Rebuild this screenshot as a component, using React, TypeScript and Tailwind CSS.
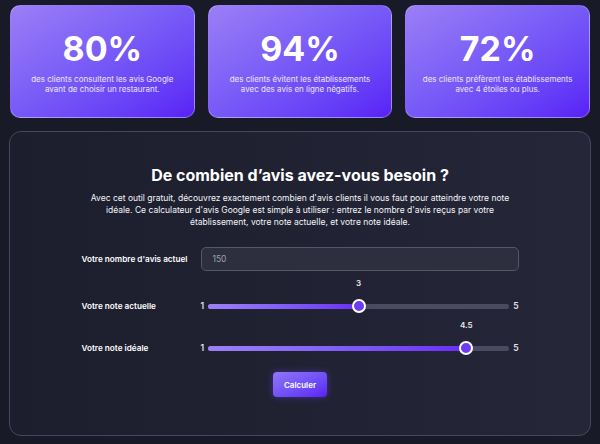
import { useState } from 'react';

const stats = [
  { value: '80%', text: ['des clients consultent les avis Google', 'avant de choisir un restaurant.'] },
  { value: '94%', text: ['des clients évitent les établissements', 'avec des avis en ligne négatifs.'] },
  { value: '72%', text: ['des clients préfèrent les établissements', 'avec 4 étoiles ou plus.'] },
];

function RangeRow({ label, value }: { label: string; value: number }) {
  const frac = (value - 1) / 4;
  return (
    <div className="flex items-center h-[14px]">
      <div className="w-[119px] text-[8.2px] font-semibold text-white">{label}</div>
      <div className="flex-1 flex items-center gap-[4px] text-[8.5px] font-semibold text-gray-200">
        <span>1</span>
        <div className="relative flex-1 h-[5px] rounded-full bg-[#4a4b5f]">
          <div
            className="h-full rounded-full bg-gradient-to-r from-[#9d80f7] to-[#6a2cf6]"
            style={{ width: `calc(7px + ${frac} * (100% - 14px))` }}
          />
          <div
            className="absolute top-1/2 -translate-y-1/2 w-[14px] h-[14px] rounded-full border-2 border-white bg-[#6b3cf4]"
            style={{ left: `calc(${frac} * (100% - 14px))` }}
          />
          <div
            className="absolute -top-[27px] w-[14px] text-center text-[8px] font-semibold text-gray-200"
            style={{ left: `calc(${frac} * (100% - 14px))` }}
          >
            {value}
          </div>
        </div>
        <span>5</span>
      </div>
    </div>
  );
}

export default function App() {
  const [count] = useState('150');

  return (
    <div className="w-[600px] h-[444px] bg-[#181a28] px-[9px] pt-[5px] font-['Inter',sans-serif] overflow-hidden">
      <div className="grid grid-cols-3 gap-[13px] px-[1px]">
        {stats.map((s) => (
          <div
            key={s.value}
            className="h-[113px] rounded-[10px] border border-white/25 bg-gradient-to-br from-[#9b7ef6] to-[#5a1ef6] flex flex-col items-center justify-center text-white"
          >
            <div className="text-[34px] leading-[40px] font-bold">{s.value}</div>
            <div className="mt-[5px] text-[8px] leading-[10px] text-white/85 text-center">
              {s.text[0]}
              <br />
              {s.text[1]}
            </div>
          </div>
        ))}
      </div>

      <div className="mt-[13px] h-[305px] rounded-[12px] border border-[#45485c] bg-gradient-to-r from-[#1c1e2d] to-[#252739] pt-[32px] flex flex-col items-center">
        <h2 className="text-[16px] leading-[22px] font-bold text-white">De combien d’avis avez-vous besoin ?</h2>
        <p className="mt-[6px] w-[440px] text-center text-[8.5px] leading-[12px] text-gray-100">
          Avec cet outil gratuit, découvrez exactement combien d'avis clients il vous faut pour atteindre votre note
          idéale. Ce calculateur d'avis Google est simple à utiliser : entrez le nombre d'avis reçus par votre
          établissement, votre note actuelle, et votre note idéale.
        </p>

        <div className="w-[437px] mt-[19px] flex flex-col">
          <div className="flex items-center h-[24px]">
            <div className="w-[119px] text-[8.2px] font-semibold text-white">Votre nombre d'avis actuel</div>
            <div className="flex-1 h-full rounded-[5px] border border-[#54566a] bg-[#2d2f3f] flex items-center px-[11px] text-[8.5px] text-gray-400">
              {count}
            </div>
          </div>
          <div className="mt-[28px]">
            <RangeRow label="Votre note actuelle" value={3} />
          </div>
          <div className="mt-[28px]">
            <RangeRow label="Votre note idéale" value={4.5} />
          </div>
        </div>

        <button className="mt-[17px] w-[54px] h-[25px] rounded-[4px] bg-gradient-to-br from-[#9274f7] to-[#5b1cf6] text-[8px] font-semibold text-white shadow-[0_0_6px_rgba(110,60,245,0.5)]">
          Calculer
        </button>
      </div>
    </div>
  );
}
